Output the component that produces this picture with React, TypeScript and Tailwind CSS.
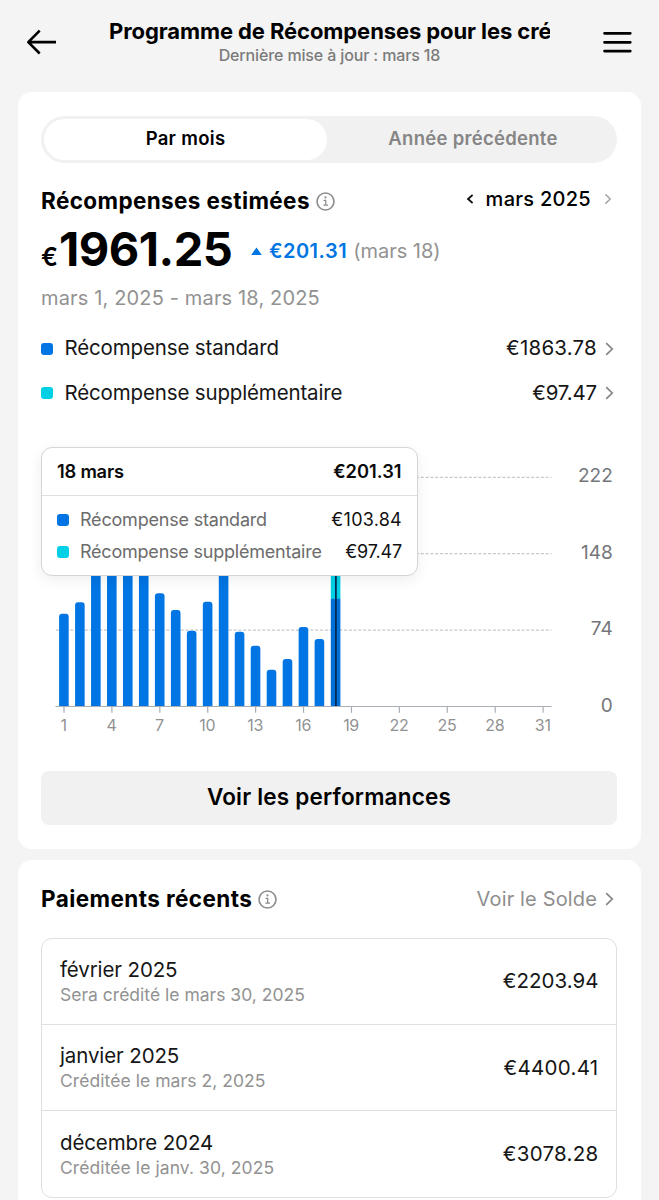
import type { ReactNode } from 'react';

const BLUE = '#0075E3';
const CYAN = '#00D0E6';

function InfoIcon() {
  return (
    <svg width="19" height="19" viewBox="0 0 19 19" fill="none" stroke="#8c8c8c">
      <circle cx="9.5" cy="9.5" r="8.5" strokeWidth="1.6" />
      <path d="M7.5 8.3H9.7V13.1M7.4 13.2H12" strokeWidth="1.25" />
      <circle cx="9.5" cy="5.4" r="1.05" fill="#8c8c8c" stroke="none" />
    </svg>
  );
}

function Chevron() {
  return (
    <svg width="9" height="14" viewBox="0 0 9 14" fill="none" stroke="#858585" strokeWidth="1.7">
      <path d="M1.2 1.2L7.2 7L1.2 12.8" />
    </svg>
  );
}

function Dot({ cyan = false }: { cyan?: boolean }) {
  return <span className={`block h-3 w-3 shrink-0 rounded-[3px] ${cyan ? 'bg-[#00d0e6]' : 'bg-[#0075e3]'}`} />;
}

const bars = [
  613.7, 602.2, 560, 550, 545, 555, 593.3, 610, 630.7, 601.7, 565, 631.7, 645.7, 669.7, 659, 627, 639,
];

function Chart() {
  const base = 706.5;
  return (
    <svg width="576" height="300" viewBox="41 440 576 300" className="block font-['Inter',sans-serif]">
      {[477.3, 553.7, 630.2].map((y) => (
        <path key={y} d={`M56 ${y}H551.5`} stroke="#c6c8cc" strokeWidth="1.2" strokeDasharray="3 1.8" />
      ))}
      {bars.map((y, i) => {
        const x = 59.1 + i * 15.97;
        return (
          <path
            key={i}
            d={`M${x} ${base}V${y + 3}q0 -3 3 -3h3.6q3 0 3 3V${base}Z`}
            fill={BLUE}
          />
        );
      })}
      <rect x="330.8" y="500" width="9.6" height="99" fill={CYAN} />
      <rect x="330.8" y="598.8" width="9.6" height="107.7" fill="#006fd6" />
      <path d="M335.9 500V706" stroke="#062a55" strokeWidth="1.8" />
      <path d="M55.5 706.5H551.5" stroke="#a9adb5" strokeWidth="1.2" />
      {[1, 4, 7, 10, 13, 16, 19, 22, 25, 28, 31].map((d) => {
        const x = 64 + (d - 1) * 15.97;
        return (
          <g key={d}>
            <path d={`M${x} 706.5V712.8`} stroke="#a9adb5" strokeWidth="1.2" />
            <text x={x - 0.4} y="730.5" textAnchor="middle" fontSize="16" letterSpacing="-0.3" fill="#929292">
              {d}
            </text>
          </g>
        );
      })}
      {[
        ['222', 482.3],
        ['148', 558.7],
        ['74', 635.1],
        ['0', 711.6],
      ].map(([t, y]) => (
        <text key={t} x="612.8" y={y} textAnchor="end" fontSize="19" fill="#757679">
          {t}
        </text>
      ))}
    </svg>
  );
}

function Tooltip() {
  return (
    <div className="absolute top-[7.5px] left-0 h-[128.5px] w-[377px] rounded-[11px] border-[1.5px] border-[#d5d5d5] bg-white shadow-[0_4px_14px_rgba(0,0,0,0.07)]">
      <div className="flex h-[48px] items-center justify-between border-b-[1.5px] border-[#dfdfdf] pr-[15.5px] pl-[15px] text-[18.3px] font-[570] text-[#0a0a0a]">
        <span className="tracking-[-0.22px]">18 mars</span>
        <span>€201.31</span>
      </div>
      <div className="flex flex-col pt-[7.5px] pr-[15px] pl-[15px] text-[18px] leading-8">
        <div className="flex h-8 items-center">
          <Dot />
          <span className="ml-[11px] tracking-[-0.2px] text-[#6c6c6c]">Récompense standard</span>
          <span className="ml-auto tracking-[0.25px] text-[#111]">€103.84</span>
        </div>
        <div className="flex h-8 items-center">
          <Dot cyan />
          <span className="ml-[11px] tracking-[-0.22px] text-[#6c6c6c]">Récompense supplémentaire</span>
          <span className="ml-auto tracking-[-0.15px] text-[#111]">€97.47</span>
        </div>
      </div>
    </div>
  );
}

function RewardRow({ cyan, label, children }: { cyan?: boolean; label: string; children: ReactNode }) {
  return (
    <div className="flex h-[44.5px] items-center pr-[3.5px] text-[20.5px] text-[#161616]">
      <Dot cyan={cyan} />
      <span className="ml-[11.5px] tracking-[-0.15px]">{label}</span>
      <span className="mr-[7.5px] ml-auto">{children}</span>
      <Chevron />
    </div>
  );
}

const payments = [
  { month: 'février 2025', note: 'Sera crédité le mars 30, 2025', amount: '€2203.94', track: 'tracking-[0.02px]', noteTrack: 'tracking-[0.01px]' },
  { month: 'janvier 2025', note: 'Créditée le mars 2, 2025', amount: '€4400.41', track: 'tracking-[0.3px]', noteTrack: 'tracking-[0.06px]' },
  { month: 'décembre 2024', note: 'Créditée le janv. 30, 2025', amount: '€3078.28', track: 'tracking-[0.27px]', noteTrack: 'tracking-[0.08px]' },
];

export default function App() {
  return (
    <div className="h-[1200px] w-[659px] overflow-hidden bg-[#f4f4f4] font-['Inter',sans-serif] text-black">
      <header className="flex h-[92px] items-start px-[26px]">
        <svg className="mt-[29px] shrink-0" width="31" height="26" viewBox="0 0 31 26" fill="none" stroke="#000" strokeWidth="2.6" strokeLinejoin="round">
          <path d="M13.7 1.7L2.3 13.1L13.7 24.5M2.3 13.1H30" />
        </svg>
        <div className="ml-[51px] w-[442px] pt-[16px]">
          <h1 className="h-[31px] overflow-hidden pl-[1px] text-[22px] leading-[31px] font-bold tracking-[-0.09px] whitespace-nowrap">
            Programme de Récompenses pour les créateurs
          </h1>
          <p className="pl-[1px] text-center text-[16px] leading-[17px] font-medium tracking-[-0.14px] text-[#7b7b7b]">
            Dernière mise à jour : mars 18
          </p>
        </div>
        <svg className="mt-[30px] ml-auto shrink-0" width="30" height="25" viewBox="0 0 30 25" stroke="#000" strokeWidth="2.7" strokeLinecap="round">
          <path d="M1.5 3.3H27.3M1.5 12.3H27.3M1.5 21.1H27.3" />
        </svg>
      </header>

      <main className="flex flex-col gap-[11px] px-[18px]">
        <section className="h-[757px] rounded-[14px] bg-white pt-[23.5px] pr-6 pl-[23px]">
          <div className="flex h-[47.5px] rounded-full bg-[#f1f1f1] p-[3px] text-[18.5px] font-[570]">
            <div className="flex w-[283px] items-center justify-center rounded-full bg-white tracking-[0.3px]">Par mois</div>
            <div className="flex flex-1 items-center justify-center pl-[5px] tracking-[0.28px] text-[#858585]">Année précédente</div>
          </div>

          <div className="mt-[18px] flex h-10 items-center">
            <h2 className="text-[22.5px] font-bold tracking-[0.38px]">Récompenses estimées</h2>
            <span className="ml-[6px]"><InfoIcon /></span>
            <div className="ml-auto flex items-center pr-[5px] pb-[5px]">
              <svg width="8" height="10" viewBox="0 0 8 10" fill="none" stroke="#111" strokeWidth="1.8"><path d="M6.6 1L2 5L6.6 9" /></svg>
              <span className="ml-[12px] text-[20px] font-medium tracking-[0.28px]">mars 2025</span>
              <svg className="ml-[13px]" width="8" height="12" viewBox="0 0 8 12" fill="none" stroke="#a9a9a9" strokeWidth="1.6"><path d="M1.4 1.4L6.2 6L1.4 10.6" /></svg>
            </div>
          </div>

          <div className="flex h-[58px] items-center">
            <div className="flex items-baseline pt-[2px]">
              <span className="text-[25px] font-semibold">€</span>
              <span className="ml-[1px] text-[47px] leading-none font-bold tracking-[-0.5px]">1961.25</span>
            </div>
            <svg className="mt-[3px] ml-[19px]" width="11" height="9" viewBox="0 0 11 9" fill={BLUE}><path d="M5.5 .4L10.8 8H.2Z" /></svg>
            <span className="ml-[6.5px] pt-[2px] text-[20px] font-semibold tracking-[0.5px] text-[#0075e3]">€201.31</span>
            <span className="ml-[6px] pt-[2px] text-[20px] tracking-[-0.02px] text-[#929292]">(mars 18)</span>
          </div>

          <p className="h-[38px] text-[20px] leading-[38px] tracking-[0.15px] text-[#929292]">mars 1, 2025 - mars 18, 2025</p>

          <div className="mt-[9.5px]">
            <RewardRow label="Récompense standard"><span className="tracking-[0.22px]">€1863.78</span></RewardRow>
            <RewardRow cyan label="Récompense supplémentaire"><span className="tracking-[-0.15px]">€97.47</span></RewardRow>
          </div>

          <div className="relative mt-[24px]">
            <Chart />
            <Tooltip />
          </div>

          <button className="mt-[31px] block h-[54px] w-full rounded-lg bg-[#f1f1f1] pb-[1px] text-[22.5px] font-[570] tracking-[0.2px]">
            Voir les performances
          </button>
        </section>

        <section className="h-[400px] rounded-[14px] bg-white pt-[19px] pr-6 pl-[23px]">
          <div className="flex h-10 items-center">
            <h2 className="text-[22.5px] font-bold tracking-[0.42px]">Paiements récents</h2>
            <span className="ml-[6px]"><InfoIcon /></span>
            <div className="ml-auto flex items-center pr-[3.5px]">
              <span className="mr-[7.5px] text-[20px] tracking-[0.15px] text-[#8e8e8e]">Voir le Solde</span>
              <Chevron />
            </div>
          </div>

          <div className="mt-[18.5px] divide-y-[1.5px] divide-[#e0e0e0] rounded-[11px] border-[1.5px] border-[#e0e0e0]">
            {payments.map((p) => (
              <div key={p.month} className="flex h-[86.3px] items-center justify-between pr-[17.5px] pl-[18px]">
                <div className="pt-[1px]">
                  <div className="text-[20.5px] leading-[26px] tracking-[-0.12px] text-[#161616]">{p.month}</div>
                  <div className={`text-[17.5px] leading-[24px] text-[#929292] ${p.noteTrack}`}>{p.note}</div>
                </div>
                <span className={`pt-[1px] text-[20.5px] text-[#161616] ${p.track}`}>{p.amount}</span>
              </div>
            ))}
          </div>
        </section>
      </main>
    </div>
  );
}
